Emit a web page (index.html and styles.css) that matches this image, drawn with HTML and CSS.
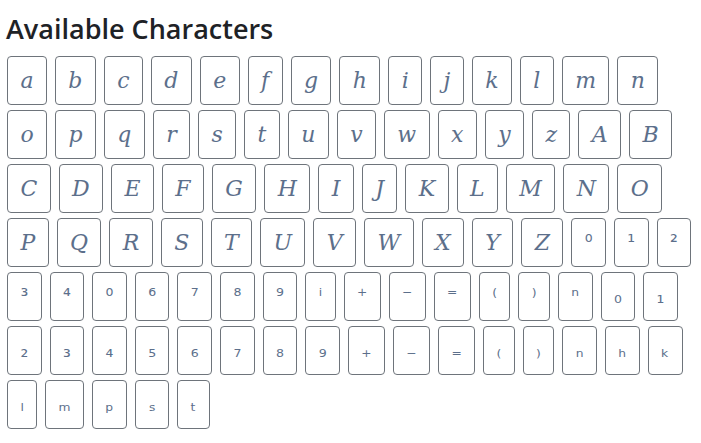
FILE: index.html
```html
<!DOCTYPE html>
<html lang="en">
<head>
<meta charset="utf-8">
<title>Available Characters</title>
<link rel="stylesheet" href="styles.css">
</head>
<body>
<div class="page">
  <h1 class="title">Available Characters</h1>
  <div class="keys">
    <div class="row">
      <span class="key">a</span><span class="key">b</span><span class="key">c</span><span class="key">d</span><span class="key">e</span><span class="key">f</span><span class="key">g</span><span class="key">h</span><span class="key">i</span><span class="key">j</span><span class="key">k</span><span class="key">l</span><span class="key">m</span><span class="key">n</span>
    </div>
    <div class="row">
      <span class="key">o</span><span class="key">p</span><span class="key">q</span><span class="key">r</span><span class="key">s</span><span class="key">t</span><span class="key">u</span><span class="key">v</span><span class="key">w</span><span class="key">x</span><span class="key">y</span><span class="key">z</span><span class="key">A</span><span class="key">B</span>
    </div>
    <div class="row">
      <span class="key">C</span><span class="key">D</span><span class="key">E</span><span class="key">F</span><span class="key">G</span><span class="key">H</span><span class="key">I</span><span class="key">J</span><span class="key">K</span><span class="key">L</span><span class="key">M</span><span class="key">N</span><span class="key">O</span>
    </div>
    <div class="row">
      <span class="key">P</span><span class="key">Q</span><span class="key">R</span><span class="key">S</span><span class="key">T</span><span class="key">U</span><span class="key">V</span><span class="key">W</span><span class="key">X</span><span class="key">Y</span><span class="key">Z</span><span class="key small">⁰</span><span class="key small">¹</span><span class="key small">²</span>
    </div>
    <div class="row">
      <span class="key small">³</span><span class="key small">⁴</span><span class="key small">⁰</span><span class="key small">⁶</span><span class="key small">⁷</span><span class="key small">⁸</span><span class="key small">⁹</span><span class="key small">ⁱ</span><span class="key small">⁺</span><span class="key small">⁻</span><span class="key small">⁼</span><span class="key small">⁽</span><span class="key small">⁾</span><span class="key small">ⁿ</span><span class="key small">₀</span><span class="key small">₁</span>
    </div>
    <div class="row">
      <span class="key small">₂</span><span class="key small">₃</span><span class="key small">₄</span><span class="key small">₅</span><span class="key small">₆</span><span class="key small">₇</span><span class="key small">₈</span><span class="key small">₉</span><span class="key small">₊</span><span class="key small">₋</span><span class="key small">₌</span><span class="key small">₍</span><span class="key small">₎</span><span class="key small">ₙ</span><span class="key small">ₕ</span><span class="key small">ₖ</span>
    </div>
    <div class="row">
      <span class="key small">ₗ</span><span class="key small">ₘ</span><span class="key small">ₚ</span><span class="key small">ₛ</span><span class="key small">ₜ</span>
    </div>
  </div>
</div>
</body>
</html>
```

FILE: styles.css
```css
html, body {
  margin: 0;
  padding: 0;
  background: #ffffff;
}

.page {
  padding: 10px 6px 0 6px;
}

.title {
  margin: 0 0 9px 0;
  font-family: "Open Sans", "DejaVu Sans", sans-serif;
  font-weight: 600;
  font-size: 27px;
  color: #1e2226;
}

.keys {
  display: flex;
  flex-direction: column;
  gap: 5px;
  margin-left: 1px;
}

.row {
  display: flex;
  gap: 8px;
}

.key {
  display: block;
  box-sizing: border-box;
  height: 49px;
  line-height: 47px;
  padding: 0 12.4px;
  border: 1px solid #6e747b;
  border-radius: 4px;
  font-family: "DejaVu Serif", serif;
  font-style: italic;
  font-size: 22px;
  color: #5c6f8b;
  text-align: center;
}

.key.small {
  font-family: "DejaVu Sans", sans-serif;
  font-style: normal;
  font-size: 19.5px;
  font-weight: normal;
}
```
